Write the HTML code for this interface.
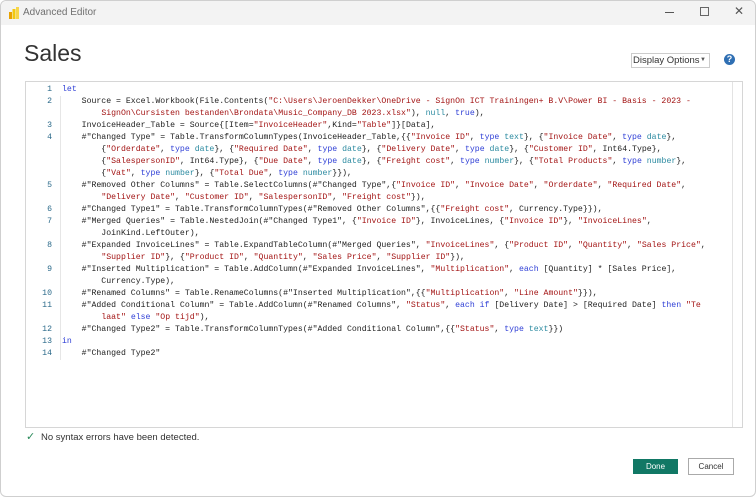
<!DOCTYPE html>
<html><head><style>
body{margin:0;width:756px;height:497px;background:#fff;font-family:"Liberation Sans",sans-serif;overflow:hidden;position:relative}
.win{position:absolute;left:0;top:0;width:754px;height:495px;border:1px solid #cfcfcf;border-radius:6px;background:#fff}
.tb{position:absolute;left:0;top:0;width:754px;height:24px;background:#f3f3f3;border-radius:6px 6px 0 0}
.tt{position:absolute;left:22px;top:6px;font-size:10px;color:#707070}
.ed{position:absolute;left:24px;top:80px;width:716px;height:345px;border:1px solid #d6d6d6;background:#fff}
.sb{position:absolute;right:0;top:0;width:9px;height:345px;border-left:1px solid #e3e3e3}
.ln{position:absolute;left:0;width:26px;text-align:right;font-family:"Liberation Mono",monospace;font-size:8.2px;color:#2b6a8a}
.code{position:absolute;left:36px;top:2px;font-family:"Liberation Mono",monospace;font-size:8.2px;line-height:12px;color:#222;white-space:pre}
.s{color:#a31515}.k{color:#2f3fd6}.t{color:#2b8aa0}
.btn{position:absolute;font-size:8px;text-align:center;line-height:15px}
</style></head><body>
<div class="win">
<div class="tb"></div>
<svg style="position:absolute;left:8px;top:6px" width="10" height="12"><rect x="0" y="5" width="3" height="7" fill="#e8a200"/><rect x="3.5" y="2" width="3" height="10" fill="#f2c811"/><rect x="7" y="0" width="3" height="12" fill="#f7d64a"/></svg>
<div class="tt">Advanced Editor</div>
<div style="position:absolute;left:664px;top:11px;width:9px;height:1px;background:#555"></div>
<div style="position:absolute;left:699px;top:6px;width:7px;height:7px;border:1px solid #666"></div>
<div style="position:absolute;left:733px;top:3px;font-size:12px;color:#555">✕</div>
<div style="position:absolute;left:23px;top:39px;font-size:23px;color:#333;font-weight:300">Sales</div>
<div style="position:absolute;left:630px;top:52px;width:76px;height:13px;border:1px solid #ccc;font-size:9.5px;color:#333;line-height:13px;padding-left:1px;white-space:nowrap;overflow:hidden">Display Options<span style="position:absolute;right:3px;top:0;font-size:6px;color:#555">▼</span></div>
<div style="position:absolute;left:723px;top:53px;width:11px;height:11px;border-radius:50%;background:#2f6fb3;color:#fff;font-size:9px;font-weight:bold;text-align:center;line-height:11px">?</div>
<div class="ed">
<div class="sb"></div>
<div class="ln" style="top:2px;line-height:12px">1<br>2<br><br>3<br>4<br><br><br><br>5<br><br>6<br>7<br><br>8<br><br>9<br><br>10<br>11<br><br>12<br>13<br>14</div>
<div style="position:absolute;left:34px;top:14px;width:1px;height:264px;background:#e6e6e6"></div>
<div class="code"><span class="k">let</span>
    Source = Excel.Workbook(File.Contents(<span class="s">"C:\Users\JeroenDekker\OneDrive - SignOn ICT Trainingen+ B.V\Power BI - Basis - 2023 -</span>
        <span class="s">SignOn\Cursisten bestanden\Brondata\Music_Company_DB 2023.xlsx"</span>), <span class="t">null</span>, <span class="k">true</span>),
    InvoiceHeader_Table = Source{[Item=<span class="s">"InvoiceHeader"</span>,Kind=<span class="s">"Table"</span>]}[Data],
    #"Changed Type" = Table.TransformColumnTypes(InvoiceHeader_Table,{{<span class="s">"Invoice ID"</span>, <span class="k">type</span> <span class="t">text</span>}, {<span class="s">"Invoice Date"</span>, <span class="k">type</span> <span class="t">date</span>},
        {<span class="s">"Orderdate"</span>, <span class="k">type</span> <span class="t">date</span>}, {<span class="s">"Required Date"</span>, <span class="k">type</span> <span class="t">date</span>}, {<span class="s">"Delivery Date"</span>, <span class="k">type</span> <span class="t">date</span>}, {<span class="s">"Customer ID"</span>, Int64.Type},
        {<span class="s">"SalespersonID"</span>, Int64.Type}, {<span class="s">"Due Date"</span>, <span class="k">type</span> <span class="t">date</span>}, {<span class="s">"Freight cost"</span>, <span class="k">type</span> <span class="t">number</span>}, {<span class="s">"Total Products"</span>, <span class="k">type</span> <span class="t">number</span>},
        {<span class="s">"Vat"</span>, <span class="k">type</span> <span class="t">number</span>}, {<span class="s">"Total Due"</span>, <span class="k">type</span> <span class="t">number</span>}}),
    #"Removed Other Columns" = Table.SelectColumns(#"Changed Type",{<span class="s">"Invoice ID"</span>, <span class="s">"Invoice Date"</span>, <span class="s">"Orderdate"</span>, <span class="s">"Required Date"</span>,
        <span class="s">"Delivery Date"</span>, <span class="s">"Customer ID"</span>, <span class="s">"SalespersonID"</span>, <span class="s">"Freight cost"</span>}),
    #"Changed Type1" = Table.TransformColumnTypes(#"Removed Other Columns",{{<span class="s">"Freight cost"</span>, Currency.Type}}),
    #"Merged Queries" = Table.NestedJoin(#"Changed Type1", {<span class="s">"Invoice ID"</span>}, InvoiceLines, {<span class="s">"Invoice ID"</span>}, <span class="s">"InvoiceLines"</span>,
        JoinKind.LeftOuter),
    #"Expanded InvoiceLines" = Table.ExpandTableColumn(#"Merged Queries", <span class="s">"InvoiceLines"</span>, {<span class="s">"Product ID"</span>, <span class="s">"Quantity"</span>, <span class="s">"Sales Price"</span>,
        <span class="s">"Supplier ID"</span>}, {<span class="s">"Product ID"</span>, <span class="s">"Quantity"</span>, <span class="s">"Sales Price"</span>, <span class="s">"Supplier ID"</span>}),
    #"Inserted Multiplication" = Table.AddColumn(#"Expanded InvoiceLines", <span class="s">"Multiplication"</span>, <span class="k">each</span> [Quantity] * [Sales Price],
        Currency.Type),
    #"Renamed Columns" = Table.RenameColumns(#"Inserted Multiplication",{{<span class="s">"Multiplication"</span>, <span class="s">"Line Amount"</span>}}),
    #"Added Conditional Column" = Table.AddColumn(#"Renamed Columns", <span class="s">"Status"</span>, <span class="k">each if</span> [Delivery Date] &gt; [Required Date] <span class="k">then</span> <span class="s">"Te</span>
        <span class="s">laat"</span> <span class="k">else</span> <span class="s">"Op tijd"</span>),
    #"Changed Type2" = Table.TransformColumnTypes(#"Added Conditional Column",{{<span class="s">"Status"</span>, <span class="k">type</span> <span class="t">text</span>}})
<span class="k">in</span>
    #"Changed Type2"</div>
</div>
<div style="position:absolute;left:25px;top:429px;color:#2a8a5a;font-size:11px">✓</div>
<div style="position:absolute;left:40px;top:431px;font-size:9.5px;color:#333">No syntax errors have been detected.</div>
<div class="btn" style="left:632px;top:458px;width:45px;height:15px;background:#117865;color:#fff">Done</div>
<div class="btn" style="left:687px;top:457px;width:44px;height:15px;border:1px solid #aaa;color:#333">Cancel</div>
</div>
</body></html>
